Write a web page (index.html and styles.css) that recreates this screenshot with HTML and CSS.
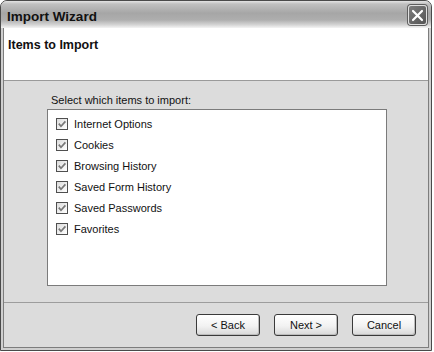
FILE: index.html
```html
<!DOCTYPE html>
<html lang="en">
  <head>
    <meta charset="UTF-8" />
    <meta name="viewport" content="width=device-width, initial-scale=1.0" />
    <title>Import Wizard</title>
    <link rel="stylesheet" href="styles.css">
  </head>
  <body>
    <div class="window">
      <div class="titlebar">
        <span class="title">Import Wizard</span>
        <div class="close-btn">
          <svg width="13" height="13" viewBox="0 0 13 13">
            <path d="M2 2 L11 11 M11 2 L2 11" stroke="#fff" stroke-width="2.2" stroke-linecap="round" />
          </svg>
        </div>
      </div>
      <div class="frame">
        <div class="client">
          <div class="header">Items to Import</div>
          <div class="content">
            <div class="list-label">Select which items to import:</div>
            <div class="listbox">
              <div class="list-item"><span class="checkbox"></span>Internet Options</div>
              <div class="list-item"><span class="checkbox"></span>Cookies</div>
              <div class="list-item"><span class="checkbox"></span>Browsing History</div>
              <div class="list-item"><span class="checkbox"></span>Saved Form History</div>
              <div class="list-item"><span class="checkbox"></span>Saved Passwords</div>
              <div class="list-item"><span class="checkbox"></span>Favorites</div>
            </div>
          </div>
          <div class="footer">
            <div class="button">&lt; Back</div>
            <div class="button">Next &gt;</div>
            <div class="button">Cancel</div>
          </div>
        </div>
      </div>
    </div>
  </body>
</html>
```

FILE: styles.css
```css
body {
  margin: 0;
  padding: 0;
  background-color: #fff;
  font-family: "Liberation Sans", Arial, sans-serif;
  color: #111;
}

.window {
  width: 432px;
  height: 351px;
  box-sizing: border-box;
  border: 1px solid #4a4a4a;
  border-radius: 7px 7px 0 0;
  background-color: #cfcfcf;
  display: flex;
  flex-direction: column;
  overflow: hidden;
}

.titlebar {
  height: 27px;
  flex-shrink: 0;
  display: flex;
  justify-content: space-between;
  align-items: flex-start;
  padding: 0 4px 0 6px;
  background: linear-gradient(#e4e4e4 0, #c0c0c0 3px, #a6a6a6 45%, #aeaeae 70%, #d4d4d4 88%, #f4f4f4 100%);
}

.title {
  margin-top: 8px;
  font-size: 13.5px;
  line-height: 16px;
  font-weight: bold;
  color: #111;
}

.close-btn {
  margin-top: 4px;
  width: 19px;
  height: 20px;
  box-sizing: border-box;
  border: 1px solid #e0e0e0;
  border-radius: 3px;
  background: linear-gradient(135deg, #7e7e7e, #555);
  box-shadow: 0 0 0 1px #5e5e5e;
  display: flex;
  justify-content: center;
  align-items: center;
}

.frame {
  flex: 1;
  display: flex;
  padding: 0 2px 2px;
}

.client {
  flex: 1;
  display: flex;
  flex-direction: column;
  border: 1px solid #7d7d7d;
  border-top: none;
  background-color: #dcdcdc;
}

.header {
  height: 53px;
  box-sizing: border-box;
  flex-shrink: 0;
  background-color: #fff;
  border-bottom: 1px solid #9a9a9a;
  padding: 10px 0 0 4px;
  font-size: 12.5px;
  line-height: 15px;
  font-weight: bold;
}

.content {
  flex: 1;
  padding: 13px 0 0 43px;
}

.list-label {
  margin-left: 4px;
  margin-bottom: 2px;
  font-size: 11px;
  line-height: 13px;
}

.listbox {
  width: 340px;
  height: 177px;
  box-sizing: border-box;
  border: 1px solid #7b7b7b;
  background-color: #fff;
  padding: 3px 0 0 8px;
}

.list-item {
  height: 21px;
  display: flex;
  align-items: center;
  gap: 6px;
  font-size: 11px;
}

.checkbox {
  width: 12px;
  height: 12px;
  box-sizing: border-box;
  border: 1px solid #4f4f4f;
  background:
    url("data:image/svg+xml,%3Csvg xmlns='http://www.w3.org/2000/svg' width='10' height='10'%3E%3Cpath d='M1.8 4.6 L4 7.2 L8.4 2.4' fill='none' stroke='%23777' stroke-width='1.7'/%3E%3C/svg%3E") center no-repeat,
    linear-gradient(135deg, #dcdcdc, #fff);
}

.footer {
  height: 45px;
  box-sizing: border-box;
  flex-shrink: 0;
  border-top: 1px solid #9d9d9d;
  padding: 11px 12px 0 0;
  display: flex;
  justify-content: flex-end;
  align-items: flex-start;
  gap: 14px;
}

.button {
  width: 64px;
  height: 22px;
  box-sizing: border-box;
  border: 1px solid #3a3a3a;
  border-radius: 3px;
  background: linear-gradient(#ffffff, #f2f2f2 55%, #d8d8d8);
  box-shadow: inset -1px -1px 0 #bcbcbc;
  display: flex;
  justify-content: center;
  align-items: center;
  font-size: 11px;
  color: #111;
}
```
